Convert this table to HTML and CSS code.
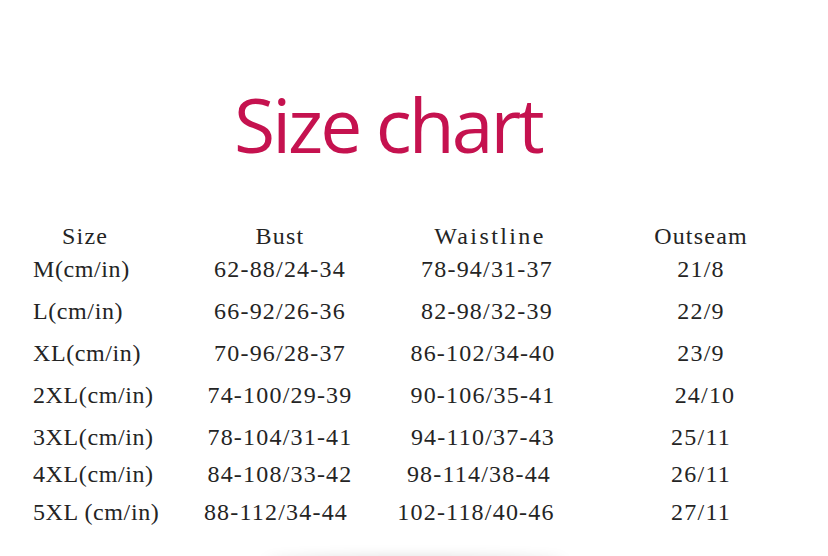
FILE: index.html
```html
<!DOCTYPE html>
<html>
<head>
<meta charset="utf-8">
<link rel="stylesheet" href="styles.css">
</head>
<body>
<div class="page">
  <h1 class="title">Size chart</h1>
  <div class="chart">
    <div class="row head">
      <div class="c1 hsize">Size</div><div class="c2">Bust</div><div class="c3 wide">Waistline</div><div class="c4">Outseam</div>
    </div>
    <div class="row rm">
      <div class="c1">M(cm/in)</div><div class="c2">62-88/24-34</div><div class="c3 right">78-94/31-37</div><div class="c4">21/8</div>
    </div>
    <div class="row rl">
      <div class="c1">L(cm/in)</div><div class="c2">66-92/26-36</div><div class="c3 right">82-98/32-39</div><div class="c4">22/9</div>
    </div>
    <div class="row rl">
      <div class="c1">XL(cm/in)</div><div class="c2">70-96/28-37</div><div class="c3">86-102/34-40</div><div class="c4">23/9</div>
    </div>
    <div class="row rl">
      <div class="c1">2XL(cm/in)</div><div class="c2">74-100/29-39</div><div class="c3">90-106/35-41</div><div class="c4 right">24/10</div>
    </div>
    <div class="row r3">
      <div class="c1">3XL(cm/in)</div><div class="c2">78-104/31-41</div><div class="c3">94-110/37-43</div><div class="c4">25/11</div>
    </div>
    <div class="row r4">
      <div class="c1">4XL(cm/in)</div><div class="c2">84-108/33-42</div><div class="c3 left">98-114/38-44</div><div class="c4">26/11</div>
    </div>
    <div class="row r5">
      <div class="c1">5XL (cm/in)</div><div class="c2 left">88-112/34-44</div><div class="c3 left2">102-118/40-46</div><div class="c4">27/11</div>
    </div>
  </div>
  <div class="shadow"></div>
</div>
</body>
</html>
```

FILE: styles.css
```css
html, body {
  margin: 0;
  padding: 0;
  background: #ffffff;
}
.page {
  width: 828px;
  height: 556px;
  position: relative;
  overflow: hidden;
}
.title {
  margin: 0;
  padding: 76px 0 0 234px;
  height: 132px;
  box-sizing: border-box;
  font-family: "Open Sans", sans-serif;
  font-weight: 400;
  font-size: 75px;
  line-height: 96px;
  color: #c5124f;
  letter-spacing: -3px;
}
.chart {
  padding: 90px 0 0 33px;
  font-family: "Liberation Serif", serif;
  font-size: 24px;
  color: #242424;
  letter-spacing: 1.2px;
}
.row {
  display: grid;
  grid-template-columns: 152px 190px 216px 220px;
  align-items: start;
  line-height: 28px;
  white-space: nowrap;
}
.head { height: 33px; }
.rm { height: 42px; }
.rl { height: 42px; }
.r3 { height: 37px; }
.r4 { height: 38px; }
.r5 { height: 30px; }
.c1 { letter-spacing: 0.6px; }
.hsize { padding-left: 29px; letter-spacing: 1.2px; }
.c2, .c3, .c4 { text-align: center; }
.wide { letter-spacing: 2.4px; padding-left: 14px; }
.left { padding-right: 8px; }
.left2 { padding-right: 14px; }
.right { padding-left: 8px; }
.shadow {
  position: absolute;
  left: 265px;
  width: 300px;
  top: 562px;
  height: 10px;
  box-shadow: 0 -4px 14px rgba(0,0,0,0.18);
  border-radius: 50%;
}
```
